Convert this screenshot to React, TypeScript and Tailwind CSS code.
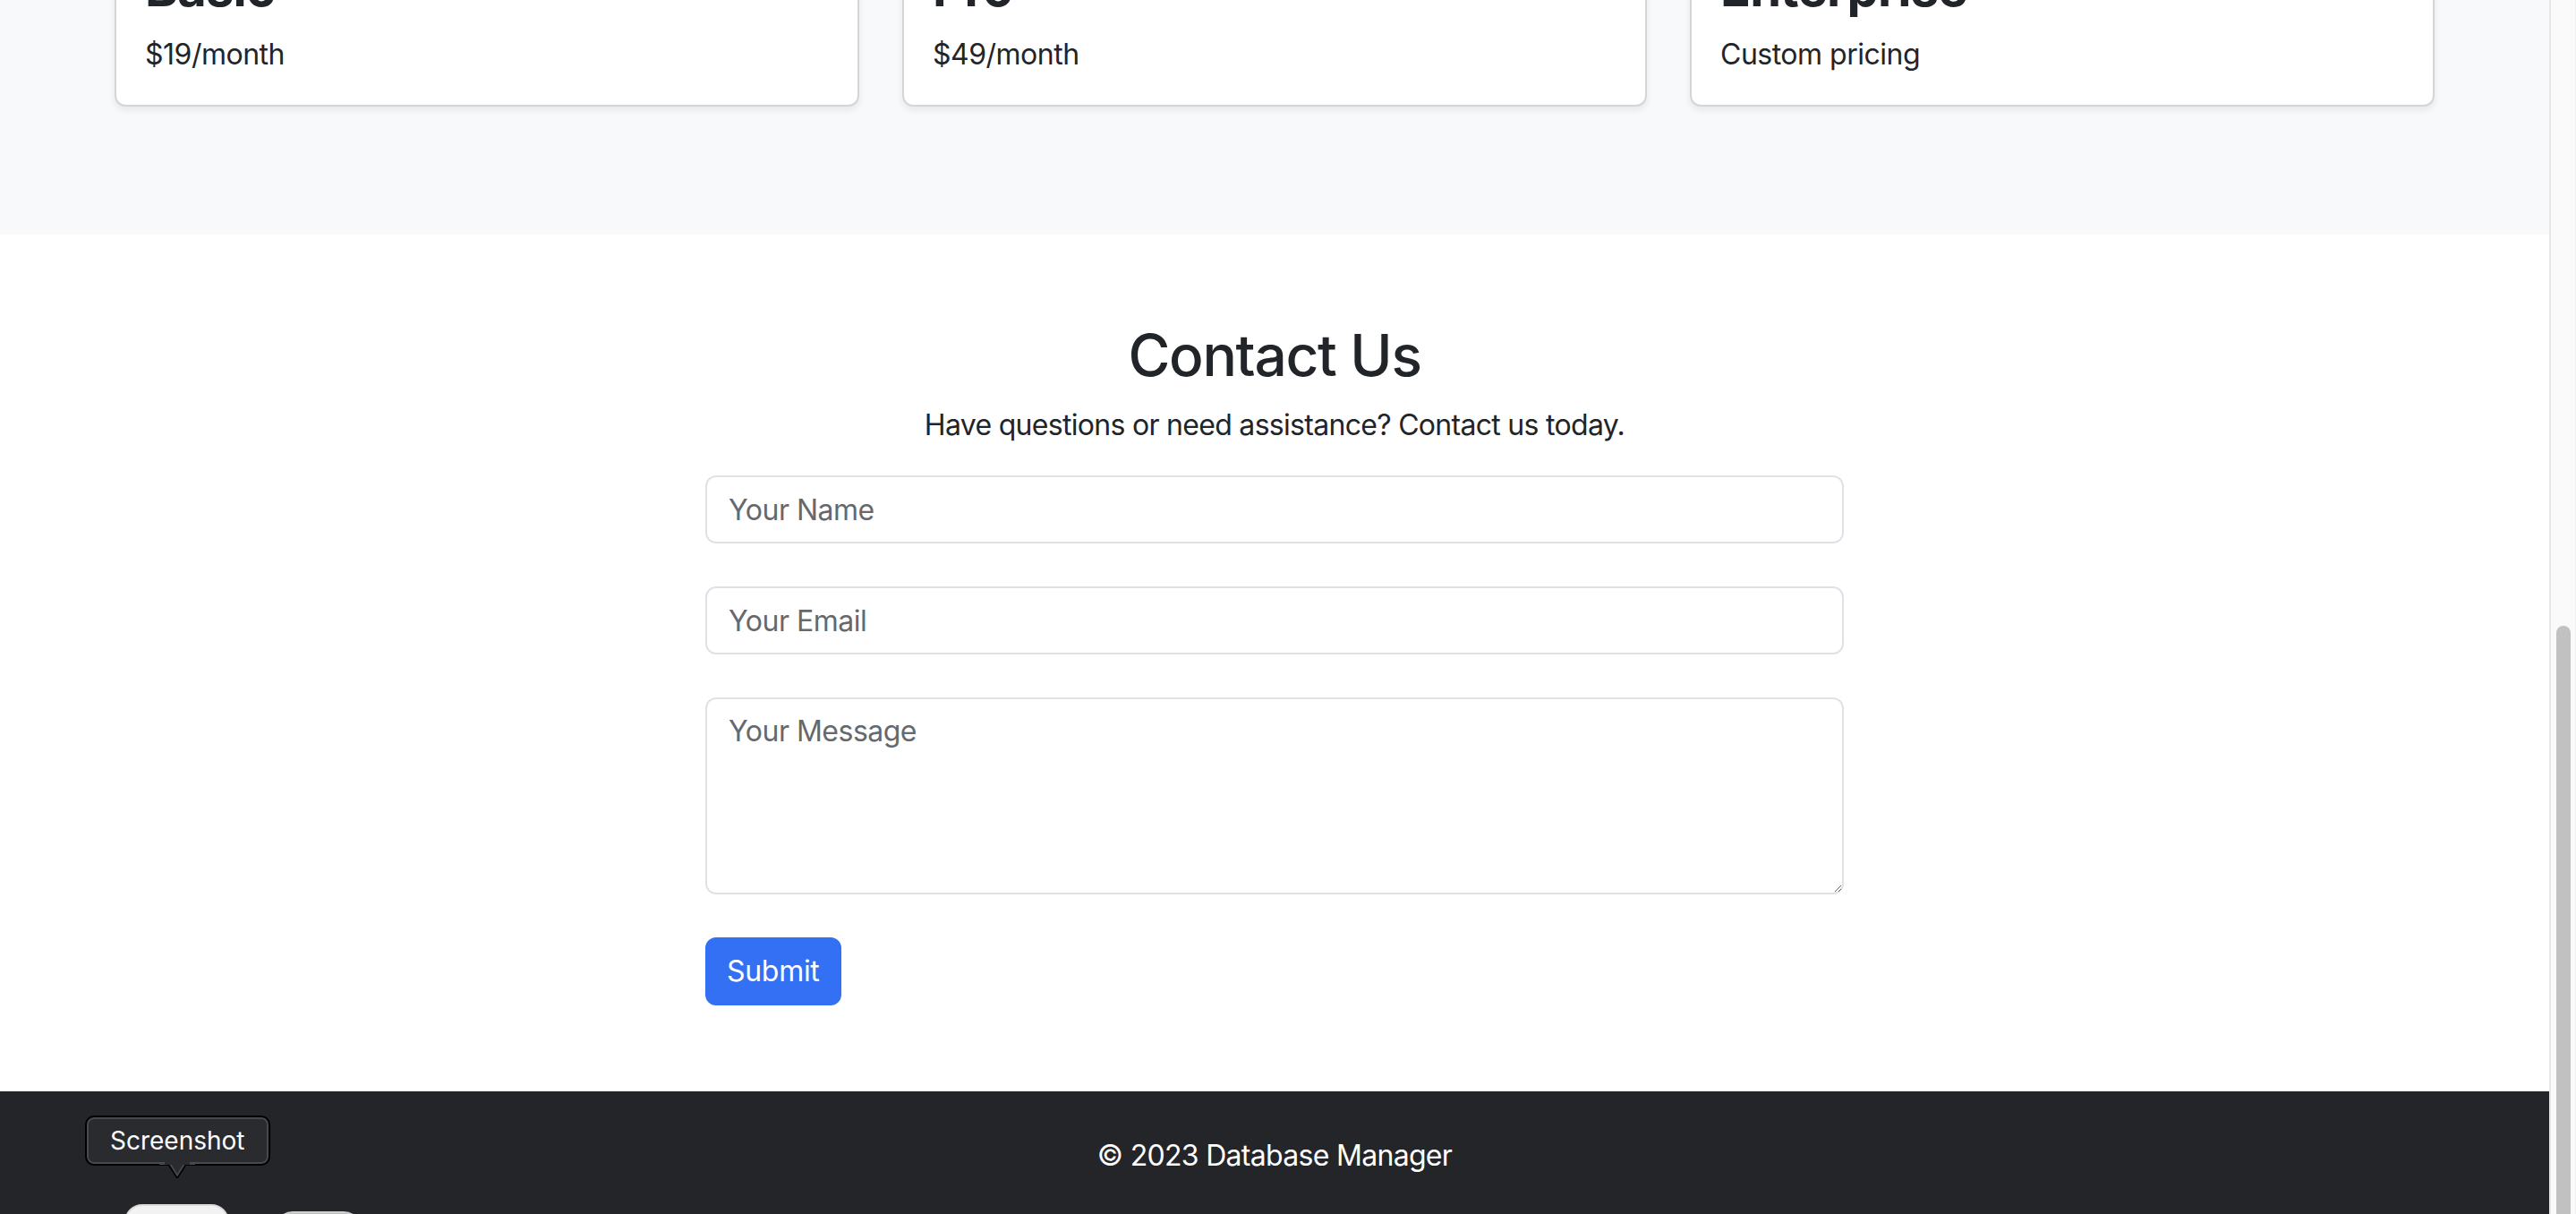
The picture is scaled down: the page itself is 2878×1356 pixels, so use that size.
import React from "react";

const font = { fontFamily: "Inter, 'Noto Sans', 'Liberation Sans', sans-serif" } as const;

function PlanCard({ title, price }: { title: string; price: string }) {
  return (
    <div className="px-[24px] mb-[47px]">
      <div className="bg-white border-2 border-[#d4d5d7] rounded-[12px] p-[32px] shadow-[0_4px_8px_rgba(0,0,0,0.075)]">
        <h3 className="text-[56px] leading-[67px] font-bold mb-[16px] text-[#212529] tracking-[-0.8px]">{title}</h3>
        <p className="text-[32px] leading-[48px] mb-0 text-[#212529] tracking-[-0.5px]">{price}</p>
      </div>
    </div>
  );
}

export default function App() {
  return (
    <div className="relative w-[2878px] h-[1356px] overflow-hidden flex bg-white" style={font}>
      <div className="flex-1 overflow-hidden">
        <div className="-mt-[176px]">
          {/* Pricing section */}
          <section className="bg-[#f8f9fa] pt-[96px] pb-[96px]">
            <div className="w-[2640px] mx-auto grid grid-cols-3">
              <PlanCard title="Basic" price="$19/month" />
              <PlanCard title="Pro" price="$49/month" />
              <PlanCard title="Enterprise" price="Custom pricing" />
            </div>
          </section>

          {/* Contact section */}
          <section className="bg-white pt-[96px] pb-[96px]">
            <div className="w-[2640px] mx-auto text-center text-[#212529]">
              <h2 className="text-[64px] leading-[77px] font-medium mb-[16px] tracking-[-1.3px]">Contact Us</h2>
              <p className="text-[32px] leading-[48px] mb-[32px] tracking-[-0.7px]">
                Have questions or need assistance? Contact us today.
              </p>
            </div>
            <form className="w-[1272px] mx-auto flex flex-col" onSubmit={(e) => e.preventDefault()}>
              <input
                type="text"
                placeholder="Your Name"
                className="block w-full h-[76px] mb-[48px] px-[24px] py-[12px] text-[32px] leading-[48px] border-2 border-[#dee2e6] rounded-[12px] placeholder:text-[#65696e] outline-none bg-white tracking-[-0.5px]"
              />
              <input
                type="email"
                placeholder="Your Email"
                className="block w-full h-[76px] mb-[48px] px-[24px] py-[12px] text-[32px] leading-[48px] border-2 border-[#dee2e6] rounded-[12px] placeholder:text-[#65696e] outline-none bg-white tracking-[-0.5px]"
              />
              <textarea
                placeholder="Your Message"
                className="block w-full h-[220px] mb-[48px] px-[24px] py-[12px] text-[32px] leading-[48px] border-2 border-[#dee2e6] rounded-[12px] placeholder:text-[#65696e] outline-none bg-white resize-y tracking-[-0.5px]"
              />
              <div>
                <button
                  type="submit"
                  className="h-[76px] px-[22px] py-[12px] text-[32px] leading-[48px] text-white bg-[#3370f4] border-2 border-[#3370f4] rounded-[12px] tracking-[-0.3px]"
                >
                  Submit
                </button>
              </div>
            </form>
          </section>

          {/* Footer */}
          <footer className="bg-[#232529] py-[48px] text-center">
            <p className="text-[32px] leading-[48px] text-white tracking-[-0.7px]">© 2023 Database Manager</p>
          </footer>
        </div>
      </div>

      {/* Scrollbar */}
      <div className="w-[30px] h-full bg-[#fafafa] border-l-2 border-[#e6e6e6] border-r border-r-[#efefef] relative">
        <div className="absolute left-[6px] top-[699px] w-[16px] h-[700px] rounded-full bg-[#c1c1c1]" />
      </div>

      {/* Screenshot toolbar overlay */}
      <div className="absolute left-[95px] top-[1246px] flex flex-col items-center">
        <div className="rounded-[10px] border-2 border-black bg-[#2a2b2e] shadow-[inset_0_0_0_2px_#48494c] px-[26px] h-[56px] flex items-center">
          <span className="text-[28px] leading-none text-white">Screenshot</span>
        </div>
        <svg width="40" height="18" viewBox="0 0 40 18" className="-mt-[4px]">
          <path d="M0 2 L12 2 L20 15 L28 2 L40 2" fill="#2a2b2e" stroke="#48494c" strokeWidth="2" />
          <path d="M6 0 L34 0 L34 3 L6 3 Z" fill="#2a2b2e" />
          <path d="M11 4 L20 18 L29 4" fill="none" stroke="#000" strokeWidth="1.5" />
        </svg>
      </div>
      <div className="absolute left-[139px] top-[1345px] w-[117px] h-[40px] rounded-[22px] bg-[#f2f2f2] border-2 border-[#dcdcdc]" />
      <div className="absolute left-[307px] top-[1353px] w-[97px] h-[40px] rounded-[22px] bg-[#bdbdbd] border-2 border-[#cfcfcf]" />
    </div>
  );
}
